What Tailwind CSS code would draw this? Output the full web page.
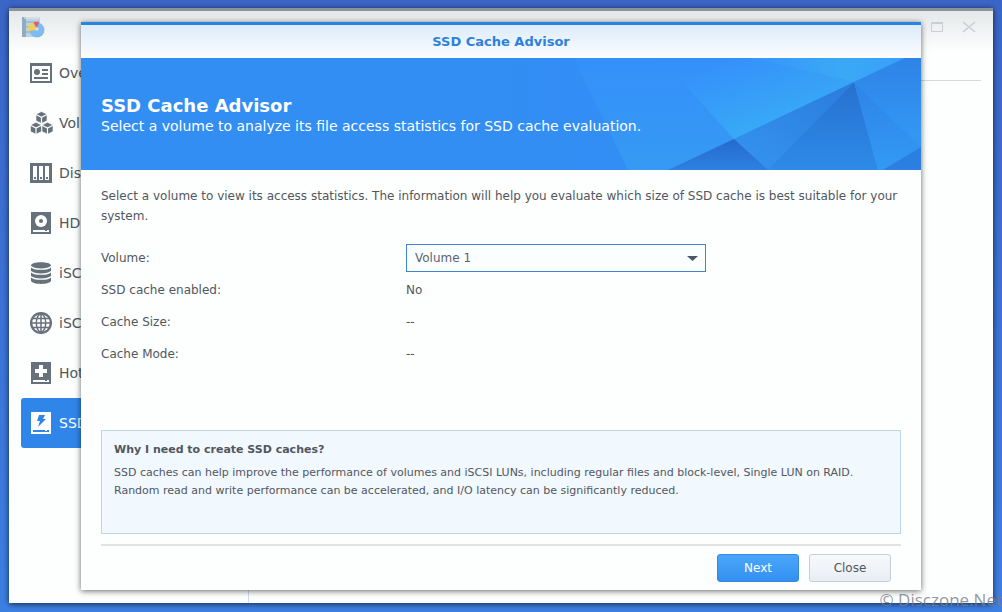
<!DOCTYPE html>
<html lang="en">
<head>
<meta charset="utf-8">
<meta name="viewport" content="width=device-width, initial-scale=1">
<title>SSD Cache Advisor</title>
<script src="https://cdn.jsdelivr.net/npm/@tailwindcss/browser@4"></script>
</head>
<body class="relative flex h-screen flex-col overflow-hidden bg-linear-to-b from-[#3b66c8] to-[#3d80e4] px-[9px] pt-2 pb-[9px] font-['Verdana','DejaVu_Sans',sans-serif] text-xs text-[#51575e]">

<div class="relative flex flex-1 flex-col border-t-3 border-[#8a9399] bg-[#fdfefe] shadow-[0_1px_6px_rgba(0,0,0,0.7)]">
  <header class="flex h-10 items-start justify-between bg-linear-to-b from-[#e4e8ea] to-[#fdfefe] px-3 pt-[5px]">
    <svg class="size-6" viewBox="0 0 24 24" aria-hidden="true">
      <rect x="1" y="1" width="18" height="20" rx="1" fill="#bdd3e2"/>
      <path d="M1 1h4v20H1z" fill="#8fadc2"/>
      <path d="M2 6h16M2 11h16M2 16h16" stroke="#8dabc0"/>
      <path d="M3 2h15" stroke="#e4eef4"/>
      <circle cx="16" cy="14" r="7.500" fill="#7fbbef"/>
      <path d="M16 14 7 15a8 8 0 0 1 5-8.500z" fill="#f1cf55"/>
      <path d="M16 12 12.500 6.500a8 8 0 0 1 5.500-.5z" fill="#ee5670"/>
      <circle cx="16" cy="13" r="1.800" fill="#c4e0f6"/>
    </svg>
    <div class="flex gap-4 pt-1 pr-1 text-[#c9ced2]">
      <button type="button" aria-label="Maximize" class="size-4"><svg class="size-4" viewBox="0 0 16 16" fill="none" stroke="currentColor"><path d="M2.500 3v8.500h11V3"/><path d="M2 3h12" stroke-width="2"/></svg></button>
      <button type="button" aria-label="Close window" class="size-4"><svg class="size-4" viewBox="0 0 16 16" fill="none" stroke="currentColor" stroke-width="1.500"><path d="m2 2 12 10M14 2 2 12"/></svg></button>
    </div>
  </header>

  <div class="flex flex-1">
    <nav class="flex w-60 shrink-0 flex-col border-r border-[#d5dbe3] pr-2 pl-3 text-sm text-[#505860]" aria-label="Storage Manager">
      <a href="#" class="-mt-[3px] flex h-[50px] items-center gap-[7px] pl-[9px]"><svg class="size-[22px] shrink-0" viewBox="0 0 22 22" fill="#67717b" aria-hidden="true"><path fill-rule="evenodd" d="M0 1h22v20H0zM2 4v15h18V4z"/><circle cx="7" cy="10" r="3"/><path d="M12 7h6v2h-6zm0 4h6v2h-6zm-8 4h14v2H4z"/></svg>Overview</a>
      <a href="#" class="flex h-[50px] items-center gap-[7px] pl-[9px]"><svg class="size-[22px] shrink-0 overflow-visible" viewBox="0 0 22 22" aria-hidden="true"><g fill="#67717b" stroke="#fff" stroke-width=".6"><path d="m11.500-.5 5.500 2.800v6.400l-5.500 2.800L6 8.700V2.300z"/><path d="m6 10.300 5.500 2.800v6.400L6 22.300.5 19.500v-6.400zM17.500 10.300l5.500 2.800v6.400l-5.500 2.800-5.500-2.800v-6.400z"/><path fill="none" stroke-width="1.200" d="m6 2.500 5.500 2.800L17 2.500m-5.500 2.800v6.200M.5 13.300 6 16.100l5.500-2.800M6 16.100v6.200M12 13.300l5.500 2.800 5.500-2.800m-5.500 2.800v6.200"/></g></svg>Volume</a>
      <a href="#" class="flex h-[50px] items-center gap-[7px] pl-[9px]"><svg class="size-[22px] shrink-0" viewBox="0 0 22 22" fill="#67717b" aria-hidden="true"><path d="M0 1h22v20H0z"/><path fill="#fff" d="M3 4h4v14H3zm6 0h4v14H9zm6 0h4v14h-4z"/><path d="M4 15h2v2H4zm6 0h2v2h-2zm6 0h2v2h-2z"/></svg>Disk Group</a>
      <a href="#" class="flex h-[50px] items-center gap-[7px] pl-[9px]"><svg class="size-[22px] shrink-0" viewBox="0 0 22 22" fill="#67717b" aria-hidden="true"><path d="M1 0h20v22H1z"/><circle cx="11" cy="9" r="6" fill="#fff"/><circle cx="11" cy="9" r="2"/><path fill="#fff" d="M3 18h16v2H3z"/><path d="M15 18h2v1h-2z"/></svg>HDD/SSD</a>
      <a href="#" class="flex h-[50px] items-center gap-[7px] pl-[9px]"><svg class="size-[22px] shrink-0" viewBox="0 0 22 22" fill="#67717b" aria-hidden="true"><path d="M1 3.500C1-1 21-1 21 3.500v15c0 4.500-20 4.500-20 0z"/><path d="M1 4.500c3 3.500 17 3.500 20 0M1 9.500c3 3.500 17 3.500 20 0M1 14.500c3 3.500 17 3.500 20 0" fill="none" stroke="#fff" stroke-width="1.300"/></svg>iSCSI LUN</a>
      <a href="#" class="flex h-[50px] items-center gap-[7px] pl-[9px]"><svg class="size-[22px] shrink-0" viewBox="0 0 22 22" aria-hidden="true"><circle cx="11" cy="11" r="11" fill="#67717b"/><circle cx="11" cy="11" r="8.700" fill="#fff"/><g fill="none" stroke="#67717b" stroke-width="1.500"><ellipse cx="11" cy="11" rx="4.700" ry="9"/><path d="M11 2v18M2 11h18M3 6.500h16M3 15.500h16"/></g></svg>iSCSI Target</a>
      <a href="#" class="flex h-[50px] items-center gap-[7px] pl-[9px]"><svg class="size-[22px] shrink-0" viewBox="0 0 22 22" fill="#67717b" aria-hidden="true"><path d="M1 0h20v22H1z"/><path fill="#fff" d="M9 3h4v4h4v4h-4v4H9v-4H5V7h4zM3 18h16v2H3z"/><path d="M15 18h2v1h-2z"/></svg>Hot Spare</a>
      <a href="#" aria-current="page" class="flex h-[50px] items-center gap-[7px] rounded-[3px] bg-[#2f86e8] pl-[9px] text-white"><svg class="size-[22px] shrink-0" viewBox="0 0 22 22" fill="#2f86e8" aria-hidden="true"><path fill="#fff" d="M1 0h20v22H1z"/><path d="M9 3h6l-2 4h3l-8 8 2-6H7zM3 18h16v2H3z"/><path fill="#fff" d="M15 18h2v1h-2z"/></svg>SSD Cache</a>
    </nav>
    <main class="flex-1 pr-3"><div class="h-[30px] border-b border-[#d3d8e3]"></div></main>
  </div>

  <section role="dialog" aria-labelledby="dialog-title" class="absolute inset-x-[72px] top-[11px] flex flex-col border-t-3 border-[#2c82df] bg-[#fdfefe] shadow-[0_1px_6px_rgba(0,0,0,0.6)]">
    <h1 id="dialog-title" class="flex h-[33px] items-center justify-center bg-linear-to-b from-[#dcebfb] to-[#fcfdfe] text-[13px] font-bold text-[#2f80dd]">SSD Cache Advisor</h1>

    <div class="relative flex h-28 flex-col justify-center bg-[#328ef2] px-5 pt-1 text-white">
      <svg class="absolute top-0 right-0 h-28 w-[420px]" viewBox="0 0 420 112" aria-hidden="true">
        <defs>
          <linearGradient id="base" x1="0" x2="1"><stop stop-color="#328ef2"/><stop offset=".15" stop-color="#338df6"/><stop offset="1" stop-color="#3593fb"/></linearGradient>
          <linearGradient id="fold" x1="0" y1="0" x2="0" y2="1"><stop stop-color="#3490fa"/><stop offset="1" stop-color="#369af3"/></linearGradient>
          <linearGradient id="glow" gradientUnits="userSpaceOnUse" x1="240" y1="0" x2="265" y2="80"><stop stop-color="#3591fa"/><stop offset="1" stop-color="#38adf5"/></linearGradient>
          <linearGradient id="top" x1="0" x2="1"><stop stop-color="#3695fa"/><stop offset=".6" stop-color="#3aa9f5"/><stop offset="1" stop-color="#389ffb"/></linearGradient>
          <linearGradient id="mid" x1="1" y1="0" x2="0" y2="1"><stop stop-color="#2b7bdc"/><stop offset="1" stop-color="#3594f0"/></linearGradient>
          <linearGradient id="deep" x1="0" y1="0" x2="0" y2="1"><stop stop-color="#2670cf"/><stop offset="1" stop-color="#2e8be8"/></linearGradient>
          <linearGradient id="side" x1="0" y1="0" x2="0" y2="1"><stop stop-color="#2e84e6"/><stop offset="1" stop-color="#3399f5"/></linearGradient>
          <linearGradient id="base2" x1="0" y1="0" x2="0" y2="1"><stop stop-color="#266ace"/><stop offset="1" stop-color="#2d80e2"/></linearGradient>
        </defs>
        <path fill="url(#base)" d="M0 0h420v112H0z"/>
        <path fill="#328ef2" fill-opacity=".7" d="M0 60h103l24 52H0z"/>
        <path fill="url(#fold)" d="M73 0h86l74 81-66 31h-40z"/>
        <path fill="url(#glow)" d="M159 0h90l104 24L233 81z"/>
        <path fill="url(#top)" d="M249 0h155l-51 24z"/>
        <path fill="url(#mid)" d="M233 81 353 24l-86 88z"/>
        <path fill="url(#base2)" d="m233 81 34 31H167z"/>
        <path fill="url(#deep)" d="m353 24 24 88H267z"/>
        <path fill="url(#side)" d="m353 24 67 65-38 23h-5z"/>
        <path fill="url(#side)" d="m353 24 51-24h16v89z"/>
        <path fill="#2b7fe0" d="M420 89v23h-38z"/>
      </svg>
      <h2 class="relative text-lg leading-5 font-bold">SSD Cache Advisor</h2>
      <p class="relative text-sm leading-5">Select a volume to analyze its file access statistics for SSD cache evaluation.</p>
    </div>

    <form class="px-5 pt-4 pb-2">
      <p class="leading-5">Select a volume to view its access statistics. The information will help you evaluate which size of SSD cache is best suitable for your system.</p>
      <div class="mt-4 grid grid-cols-[305px_1fr] auto-rows-[32px] items-center">
        <label for="volume">Volume:</label>
        <div class="relative w-[300px]">
          <select id="volume" class="h-7 w-full appearance-none border border-[#3f86d0] bg-[#fbfeff] px-2 text-[#5a646c]"><option>Volume 1</option></select>
          <svg class="pointer-events-none absolute top-3 right-2 h-[5px] w-[11px]" viewBox="0 0 11 5" fill="#4b5662" aria-hidden="true"><path d="M0 0h11L5.500 5z"/></svg>
        </div>
        <span>SSD cache enabled:</span><span>No</span>
        <span>Cache Size:</span><span>--</span>
        <span>Cache Mode:</span><span>--</span>
      </div>
      <aside class="mt-[60px] h-[104px] border border-[#bdd7e8] bg-[#f1f8fe] px-3 pt-[11px] text-[11px]">
        <h3 class="leading-4 font-bold">Why I need to create SSD caches?</h3>
        <p class="mt-[6px] leading-[18px]">SSD caches can help improve the performance of volumes and iSCSI LUNs, including regular files and block-level, Single LUN on RAID.<br>Random read and write performance can be accelerated, and I/O latency can be significantly reduced.</p>
      </aside>
      <footer class="mt-[10px] flex justify-end gap-[10px] border-t-2 border-[#e0e3e4] pt-2 pr-[10px]">
        <button type="button" class="h-7 w-[82px] rounded-[3px] border border-[#3489e0] bg-linear-to-b from-[#4ba6fb] to-[#3390f0] text-white">Next</button>
        <button type="button" class="h-7 w-[82px] rounded-[3px] border border-[#c8ced8] bg-linear-to-b from-[#f7f9fb] to-[#e9edf4]">Close</button>
      </footer>
    </form>
  </section>
</div>

<div class="absolute right-0 bottom-0 font-['Comic_Sans_MS','Open_Sans',sans-serif] text-[17px] leading-6 whitespace-nowrap text-[#777c82]/80">© Disczone.Net</div>
</body>
</html>
